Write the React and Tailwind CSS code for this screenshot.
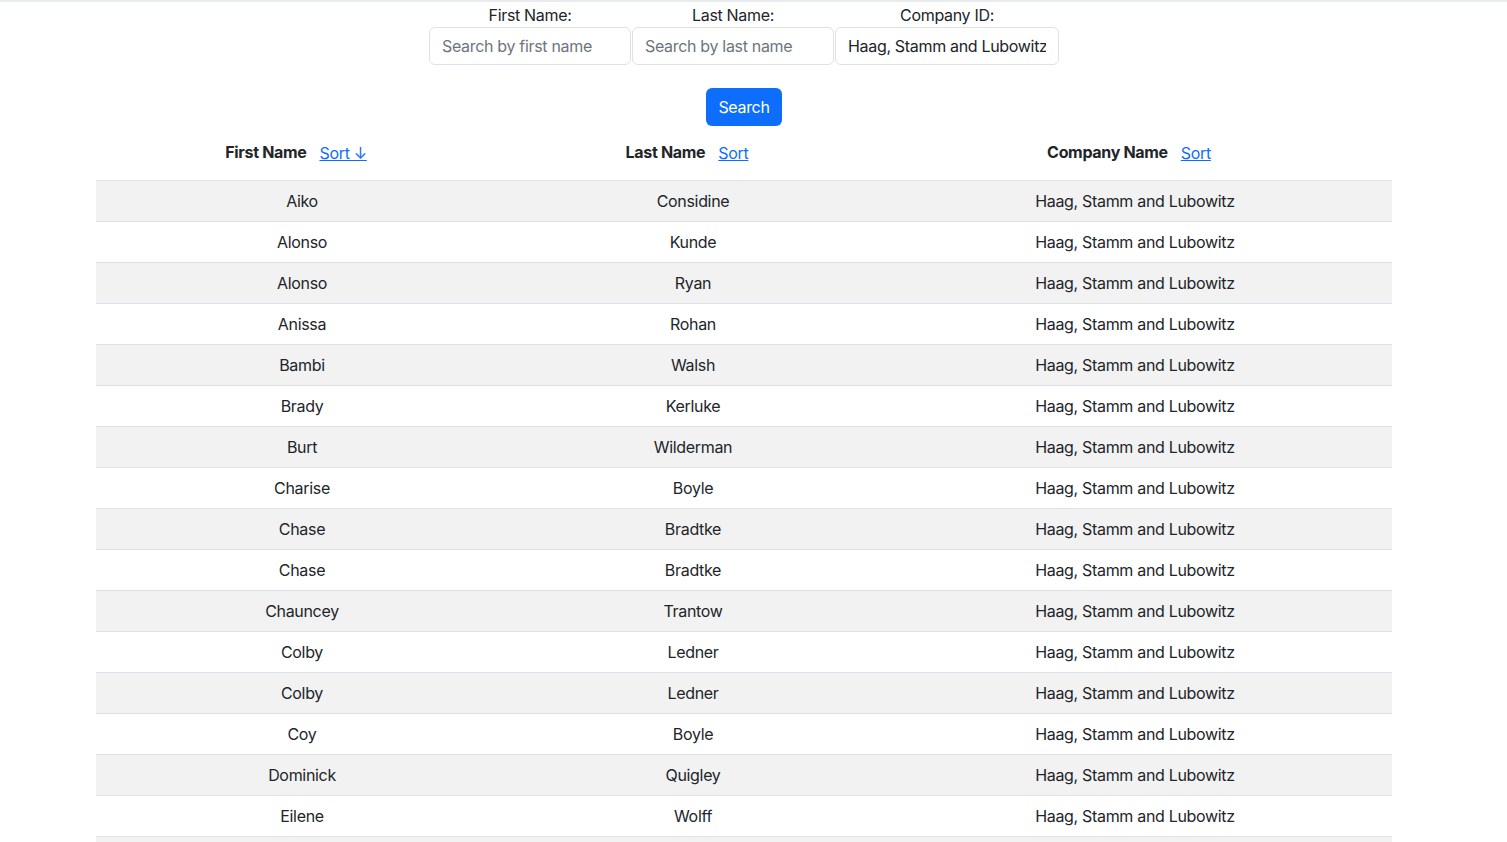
import React, { useState } from 'react';

const COMPANY = 'Haag, Stamm and Lubowitz';

const people = [
  ['Aiko', 'Considine'],
  ['Alonso', 'Kunde'],
  ['Alonso', 'Ryan'],
  ['Anissa', 'Rohan'],
  ['Bambi', 'Walsh'],
  ['Brady', 'Kerluke'],
  ['Burt', 'Wilderman'],
  ['Charise', 'Boyle'],
  ['Chase', 'Bradtke'],
  ['Chase', 'Bradtke'],
  ['Chauncey', 'Trantow'],
  ['Colby', 'Ledner'],
  ['Colby', 'Ledner'],
  ['Coy', 'Boyle'],
  ['Dominick', 'Quigley'],
  ['Eilene', 'Wolff'],
];

const fontStack = { fontFamily: 'Inter, "Liberation Sans", Arial, sans-serif' };

function Field({ label, placeholder, value, onChange, width }) {
  return (
    <div className="flex flex-col items-center">
      <label className="text-base leading-6 text-[#212529]">{label}</label>
      <input
        className={`${width} h-[38px] px-3 border border-[#dee2e6] rounded-md text-base text-[#212529] placeholder:text-[#6c757d] outline-none`}
        placeholder={placeholder}
        value={value}
        onChange={(e) => onChange(e.target.value)}
      />
    </div>
  );
}

function HeaderCell({ title, sortLabel }) {
  return (
    <span className="inline-flex items-center gap-[13px] pr-3">
      <span className="font-bold leading-6">{title}</span>
      <a href="#" className="relative top-px font-normal text-[#0d6efd] underline leading-6">{sortLabel}</a>
    </span>
  );
}

export default function App() {
  const [firstName, setFirstName] = useState('');
  const [lastName, setLastName] = useState('');
  const [company, setCompany] = useState(COMPANY);

  return (
    <div className="h-screen overflow-hidden bg-white border-t-2 border-[#e9ecef] text-[#212529] tracking-[-0.02em]" style={fontStack}>
      <div className="w-[1488px] pt-px">
        <div className="flex justify-center">
          <Field label="First Name:" placeholder="Search by first name" value={firstName} onChange={setFirstName} width="w-[202px]" />
          <div className="w-px" />
          <Field label="Last Name:" placeholder="Search by last name" value={lastName} onChange={setLastName} width="w-[202px]" />
          <div className="w-px" />
          <Field label="Company ID:" placeholder="Company" value={company} onChange={setCompany} width="w-[224px]" />
        </div>

        <div className="flex justify-center mt-[23px]">
          <button className="h-[38px] w-[76px] bg-[#0d6efd] text-white text-base rounded-md">Search</button>
        </div>

        <div className="px-[96px] mt-2">
          <table className="w-full border-collapse">
            <thead>
              <tr className="border-b border-[#dee2e6]">
                <th className="w-[412px] pt-[6px] pb-[16px] align-top">
                  <HeaderCell title="First Name" sortLabel="Sort ↓" />
                </th>
                <th className="w-[370px] pt-[6px] pb-[16px] align-top">
                  <HeaderCell title="Last Name" sortLabel="Sort" />
                </th>
                <th className="pt-[6px] pb-[16px] align-top">
                  <HeaderCell title="Company Name" sortLabel="Sort" />
                </th>
              </tr>
            </thead>
            <tbody>
              {people.map(([first, last], i) => (
                <tr key={i} className={`border-b border-[#dee2e6] ${i % 2 === 0 ? 'bg-[#f2f2f2]' : 'bg-white'}`}>
                  <td className="py-2 leading-6 text-center">{first}</td>
                  <td className="py-2 leading-6 text-center">{last}</td>
                  <td className="py-2 leading-6 text-center">{COMPANY}</td>
                </tr>
              ))}
              <tr className="bg-[#f2f2f2]">
                <td className="h-[40px]" />
                <td />
                <td />
              </tr>
            </tbody>
          </table>
        </div>
      </div>
    </div>
  );
}
